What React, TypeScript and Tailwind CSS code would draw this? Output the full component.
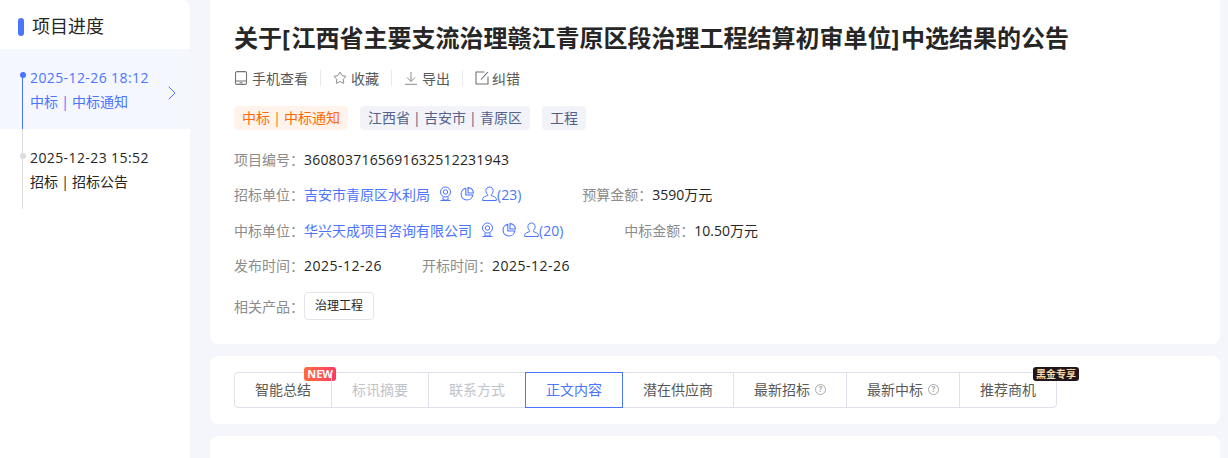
import React from "react";
import { ChevronRight, Star } from "lucide-react";

function Sep() {
  return <span className="mx-3 h-4 w-px bg-[#e8eaf0]" />;
}

function Label({ children }: { children: React.ReactNode }) {
  return <span className="text-[#8c8c8c]">{children}</span>;
}

function CompanyIcons({ count }: { count: string }) {
  return (
    <span className="ml-[9px] flex items-center text-[#4b74ff]">
      {/* webcam */}
      <svg width="13" height="16" viewBox="0 0 13 16" fill="none" stroke="currentColor" strokeWidth="1">
        <circle cx="6.5" cy="6" r="5" />
        <circle cx="6.5" cy="6" r="2.2" />
        <path d="M4 11v3h5v-3M1.5 14.5h10" />
      </svg>
      {/* pie */}
      <svg className="ml-[8px]" width="14" height="14" viewBox="0 0 14 14" fill="none" stroke="currentColor" strokeWidth="1.1">
        <path d="M5.8 1.300A5.900 5.900 0 1 0 12.800 8H5.800z" />
        <path d="M8 0.600a5.400 5.400 0 0 1 5.400 5.400H8z" />
      </svg>
      {/* person */}
      <svg className="ml-[8px]" width="15" height="16" viewBox="0 0 15 16" fill="none" stroke="currentColor" strokeWidth="1">
        <path d="M7.5 1a3.6 3.6 0 0 1 3.6 3.8c0 1.7-.8 3-1.8 3.7v1.1c1.9.6 5 1.6 5 3.2v1.7H.7v-1.7c0-1.6 3.1-2.6 5-3.2V8.500c-1-.7-1.800-2-1.800-3.700A3.600 3.600 0 0 1 7.500 1z" />
      </svg>
      <span className="text-[14px]">({count})</span>
    </span>
  );
}

function Tab({ label, className = "", help = false, children }: { label: string; className?: string; help?: boolean; children?: React.ReactNode }) {
  return (
    <div className={`relative flex h-[34px] items-center justify-center border-l border-[#dfe1ea] pb-[2px] text-[14px] first:border-l-0 ${className}`}>
      {label}
      {help && (
        <span className="ml-[5px] flex h-[11px] w-[11px] items-center justify-center rounded-full border border-[#a8a8a8] text-[8px] font-bold leading-none text-[#a8a8a8]">?</span>
      )}
      {children}
    </div>
  );
}

export default function App() {
  return (
    <div className="flex h-[458px] w-[1228px] gap-[20px] overflow-hidden bg-[#f5f6fb] font-['Open_Sans','Noto_Sans_CJK_SC',sans-serif] text-[#262626]">
      <aside className="h-[458px] w-[190px] shrink-0 rounded-tr-lg bg-white">
        <div className="flex h-[49px] items-center pl-[18px] pt-[4px]">
          <span className="h-[18px] w-[6px] rounded-full bg-[#4b74ff]" />
          <h2 className="ml-[8px] text-[18px] text-[#262626]">项目进度</h2>
        </div>
        <div className="flex h-[80px] items-start bg-[#f5f7ff]">
          <div className="relative ml-[22px] mt-[26px] h-[54px] w-[1px] bg-[#4b74ff]">
            <span className="absolute -left-[2.5px] -top-[3px] h-[6px] w-[6px] rounded-full bg-[#4b74ff]" />
          </div>
          <div className="ml-[7px] flex-1 pt-[19px] text-[#4b74ff]">
            <div className="text-[14px] leading-[20px] tracking-[0.4px]">2025-12-26 18:12</div>
            <div className="mt-[4px] text-[14px] leading-[20px] [word-spacing:-0.5px]">中标 | 中标通知</div>
          </div>
          <ChevronRight className="mr-[6px] mt-[32px] shrink-0 text-[#4b74ff]" size={24} strokeWidth={1} />
        </div>
        <div className="flex h-[80px] items-start">
          <div className="relative ml-[22px] h-[80px] w-[1px] bg-[#dcdcdc]">
            <span className="absolute -left-[2.5px] top-[24px] h-[6px] w-[6px] rounded-full bg-[#dcdcdc]" />
          </div>
          <div className="ml-[7px] flex-1 pt-[19px]">
            <div className="text-[14px] leading-[20px] tracking-[0.4px]">2025-12-23 15:52</div>
            <div className="mt-[4px] text-[14px] leading-[20px] [word-spacing:-0.5px]">招标 | 招标公告</div>
          </div>
        </div>
      </aside>

      <main className="flex w-[1010px] shrink-0 flex-col gap-[12px]">
        <section className="h-[344px] shrink-0 rounded-b-lg bg-white px-[24px] pt-[21px]">
          <h1 className="text-[24px] font-bold leading-[34px] text-[#262626]">
            关于<span className="mr-[1.5px]">[</span>江西省主要支流治理赣江青原区段治理工程结算初审单位<span className="mr-[1.5px]">]</span>中选结果的公告
          </h1>

          <div className="mt-[13px] flex h-[20px] items-center text-[14px] text-[#595959]">
            <svg width="14" height="14" viewBox="0 0 14 14" fill="none" stroke="#737373" strokeWidth="1.1">
              <rect x="1.5" y="0.6" width="11" height="12.800" rx="1.500" />
              <path d="M1.500 10h11M5.500 11.700h3" />
            </svg>
            <span className="ml-[4px]">手机查看</span>
            <Sep />
            <Star size={14} strokeWidth={1.2} />
            <span className="ml-[4px]">收藏</span>
            <Sep />
            <svg className="mx-[1px]" width="12" height="14" viewBox="0 0 12 14" fill="none" stroke="#8c8c8c" strokeWidth="1">
              <path d="M6 1v9.500M2 6.500l4 4 4-4M0 13.300h12" />
            </svg>
            <span className="ml-[4px]">导出</span>
            <Sep />
            <svg width="14" height="14" viewBox="0 0 14 14" fill="none" stroke="#737373" strokeWidth="1.1">
              <path d="M9.500 1H1v12h12V5.500M6 8.500 12.800 1.200" />
            </svg>
            <span className="ml-[3px]">纠错</span>
          </div>

          <div className="mt-[18px] flex gap-[12px] text-[14px] [word-spacing:-0.5px]">
            <span className="flex h-[24px] items-center rounded-sm bg-[#fff3ec] px-[8px] pb-[1px] text-[#ff6a00]">中标 | 中标通知</span>
            <span className="flex h-[24px] items-center rounded-sm bg-[#f2f3f8] px-[8px] pb-[1px] text-[#52608a]">江西省 | 吉安市 | 青原区</span>
            <span className="flex h-[24px] items-center rounded-sm bg-[#f2f3f8] px-[8px] pb-[1px] text-[#52608a]">工程</span>
          </div>

          <div className="mt-[19px] flex h-[20px] items-center text-[14px]">
            <Label>项目编号：</Label>
            <span className="tracking-[0.2px]">3608037165691632512231943</span>
          </div>

          <div className="mt-[15px] flex h-[20px] items-center text-[14px]">
            <Label>招标单位：</Label>
            <span className="text-[#4b74ff]">吉安市青原区水利局</span>
            <CompanyIcons count="23" />
            <span className="ml-[61px] flex items-center">
              <Label>预算金额：</Label>
              <span>3590万元</span>
            </span>
          </div>

          <div className="mt-[16px] flex h-[20px] items-center text-[14px]">
            <Label>中标单位：</Label>
            <span className="text-[#4b74ff]">华兴天成项目咨询有限公司</span>
            <CompanyIcons count="20" />
            <span className="ml-[61px] flex items-center">
              <Label>中标金额：</Label>
              <span>10.50万元</span>
            </span>
          </div>

          <div className="mt-[15px] flex h-[20px] items-center text-[14px]">
            <Label>发布时间：</Label>
            <span className="w-[118px] tracking-[0.5px]">2025-12-26</span>
            <Label>开标时间：</Label>
            <span className="tracking-[0.5px]">2025-12-26</span>
          </div>

          <div className="mt-[17px] flex items-center text-[14px]">
            <Label>相关产品：</Label>
            <span className="flex h-[28px] items-center rounded-sm border border-[#e3e5ec] px-[10px] text-[12px]">治理工程</span>
          </div>
        </section>

        <section className="h-[68px] shrink-0 rounded-lg bg-white px-[24px] pt-[16px]">
          <div className="grid w-[823px] grid-cols-[96px_97px_97px_97px_111px_113px_113px_97px] rounded-[4px] border border-[#dfe1ea] text-[#595959]">
            <Tab label="智能总结">
              <span className="absolute -top-[6px] -right-[5px] rounded-[3px] bg-gradient-to-r from-[#ff6b3d] to-[#ff3860] px-[3px] text-[11px] font-bold leading-[14px] text-white">NEW</span>
            </Tab>
            <Tab label="标讯摘要" className="text-[#bfc3cc]" />
            <Tab label="联系方式" className="text-[#bfc3cc]" />
            <Tab label="正文内容" className="z-10 -my-px -mr-px h-[36px] border !border-[#4b74ff] text-[#4b74ff]" />
            <Tab label="潜在供应商" />
            <Tab label="最新招标" help />
            <Tab label="最新中标" help />
            <Tab label="推荐商机">
              <span className="absolute -top-[6px] -right-[23px] rounded-[3px] bg-[#21161a] px-[3px] text-[10px] font-bold leading-[14px] text-[#f5d9a8]">黑金专享</span>
            </Tab>
          </div>
        </section>

        <section className="flex-1 rounded-t-lg bg-white" />
      </main>
    </div>
  );
}
